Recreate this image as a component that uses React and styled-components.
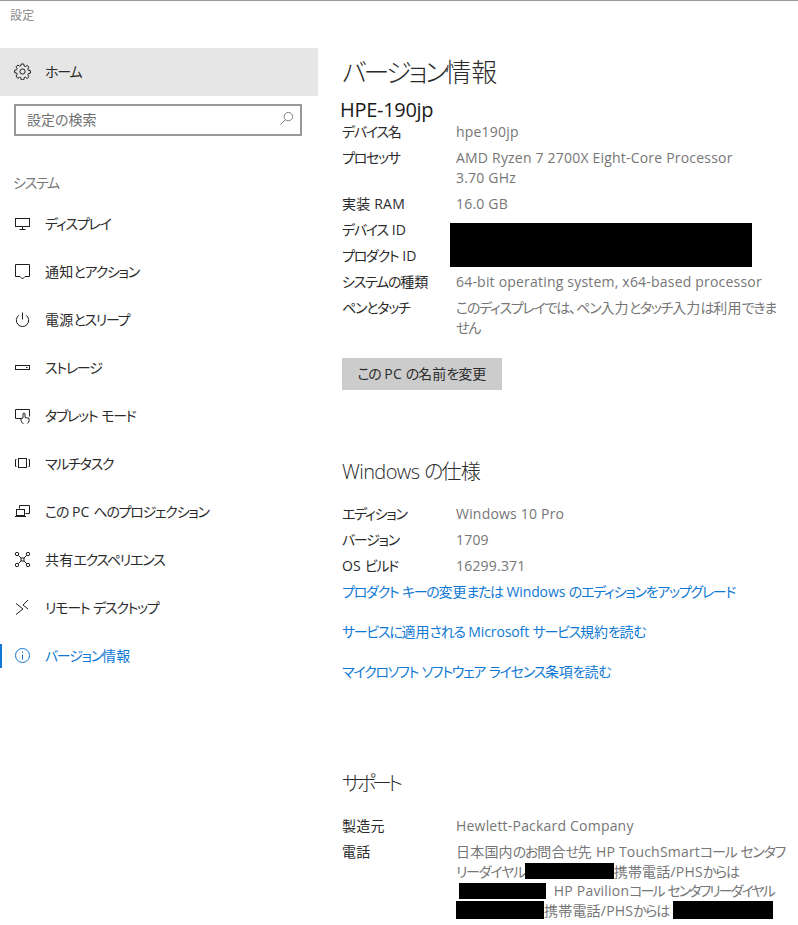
import React from "react";
import styled, { createGlobalStyle } from "styled-components";

const Global = createGlobalStyle`
  html, body { margin: 0; padding: 0; background: #fff; }
  body {
    width: 798px;
    height: 925px;
    overflow: hidden;
    font-family: "Open Sans", "Noto Sans CJK JP", sans-serif;
    font-size: 14px;
    font-feature-settings: "palt";
    letter-spacing: 0.2px;
    color: #2b2b2b;
  }
`;

const Window = styled.div`
  border-top: 1px solid #9a9a9a;
  height: 924px;
  display: flex;
  flex-direction: column;
`;

const TitleBar = styled.div`
  height: 47px;
  padding: 7px 0 0 10px;
  box-sizing: border-box;
  font-size: 12px;
  line-height: 16px;
  color: #8c8c8c;
`;

const Body = styled.div`
  display: flex;
  flex: 1;
  min-height: 0;
`;

const Sidebar = styled.nav`
  width: 318px;
  flex: none;
`;

const HomeRow = styled.div`
  height: 48px;
  background: #e6e6e6;
  display: flex;
  align-items: center;
  padding-left: 14px;
  padding-bottom: 2px;
  box-sizing: border-box;
`;

const IconSlot = styled.span`
  width: 17px;
  height: 17px;
  flex: none;
  margin-right: 14px;
  display: flex;
  align-items: center;
  justify-content: center;
  color: ${(p) => (p.$active ? "#0f78d4" : "#1f1f1f")};
`;

const SearchBox = styled.div`
  margin: 8px 16px 0 14px;
  height: 32px;
  box-sizing: border-box;
  border: 2px solid #999;
  display: flex;
  align-items: center;
  justify-content: space-between;
  padding: 0 6px 3px 11px;
  color: #6f6f6f;
  letter-spacing: 0;
`;

const SectionLabel = styled.div`
  margin: 37px 0 0 13px;
  height: 20px;
  line-height: 20px;
  color: #777;
`;

const NavList = styled.div`
  margin-top: 7px;
`;

const NavItem = styled.div`
  position: relative;
  height: 48px;
  box-sizing: border-box;
  display: flex;
  align-items: center;
  padding-left: 14px;
  padding-bottom: 2px;
  white-space: pre;
  color: ${(p) => (p.$active ? "#0f78d4" : "#2b2b2b")};
`;

const ActiveBar = styled.span`
  position: absolute;
  left: 0;
  top: 12px;
  width: 2px;
  height: 24px;
  background: #0f78d4;
`;

const Main = styled.main`
  flex: 1;
  padding: 0 12px 0 24px;
  min-width: 0;
`;

const PageTitle = styled.h1`
  margin: 0;
  padding-top: 4px;
  box-sizing: border-box;
  font-size: 26px;
  font-weight: 300;
  line-height: 40px;
  height: 48px;
  color: #2a2a2a;
`;

const DeviceName = styled.h2`
  margin: 0 0 0 -2px;
  font-size: 20px;
  font-weight: 400;
  line-height: 28px;
  height: 26px;
  letter-spacing: -0.3px;
  color: #1a1a1a;
`;

const SectionTitle = styled.h2`
  margin: ${(p) => p.$top}px 0 ${(p) => p.$bottom}px;
  font-size: 20px;
  font-weight: 300;
  line-height: 28px;
  letter-spacing: -0.6px;
  color: #2a2a2a;
`;

const Specs = styled.dl`
  position: relative;
  margin: 0;
  display: grid;
  grid-template-columns: 114px 1fr;
  row-gap: 6px;
  line-height: 20px;
`;

const Term = styled.dt`
  margin: 0;
  color: #2b2b2b;
`;

const Detail = styled.dd`
  margin: 0;
  color: #767676;
  line-height: ${(p) => p.$lh || 20}px;
`;

const Blackout = styled.span`
  position: absolute;
  left: 108px;
  top: 101px;
  width: 302px;
  height: 44px;
  background: #000;
`;

const InlineBlack = styled.span`
  display: inline-block;
  vertical-align: top;
  margin: ${(p) => p.$top}px ${(p) => p.$after || 0}px 0 ${(p) => p.$before || 0}px;
  height: ${(p) => p.$h || 16}px;
  width: ${(p) => p.$w}px;
  background: #000;
`;

const RenameButton = styled.button`
  display: block;
  margin-top: 20px;
  width: 160px;
  height: 32px;
  border: 0;
  padding: 0 0 2px;
  background: #ccc;
  color: #2b2b2b;
  font: inherit;
  letter-spacing: inherit;
  font-feature-settings: inherit;
`;

const LinkList = styled.div`
  margin-top: 6px;
  display: flex;
  flex-direction: column;
  gap: 20px;
  line-height: 20px;
  letter-spacing: -0.1px;
`;

const TextLink = styled.a`
  color: #0f78d4;
`;

const Kana = styled.span`
  letter-spacing: ${(p) => p.$t || -0.09}em;
`;

// Segoe/Yu Gothic kana is narrower than Noto's even with palt, so squeeze kana runs only
const Jp = ({ children, t }) =>
  children.split(/([\u3041-\u30ff]+)/).map((run, i) =>
    i % 2 ? <Kana key={i} $t={t}>{run}</Kana> : run
  );

const Icon = ({ children, size = 17 }) => (
  <svg width={size} height={size} viewBox="0 0 17 17" fill="none" stroke="currentColor" strokeWidth="1">
    {children}
  </svg>
);

const navItems = [
  {
    label: "ディスプレイ",
    icon: (
      <>
        <rect x="1.5" y="3.5" width="14" height="8" />
        <path d="M8.5 12v2M5.5 14.5h6" />
      </>
    ),
  },
  {
    label: "通知とアクション",
    icon: <path d="M1.5 1.5h14v12h-4.5l-2.5 2.5-2.5-2.5h-4.5z" />,
  },
  {
    label: "電源とスリープ",
    icon: (
      <>
        <path d="M8.5 1.5v7" />
        <path d="M5 4.2a6.2 6.2 0 1 0 7 0" />
      </>
    ),
  },
  {
    label: "ストレージ",
    icon: (
      <>
        <rect x="1.5" y="6.5" width="14" height="4" />
        <path d="M12 8.5h1.5" />
      </>
    ),
  },
  {
    label: "タブレット モード",
    icon: (
      <>
        <path d="M7 11.5h-5.5v-9h14v7" />
        <path d="M9.5 16.5a3.5 3.5 0 0 1-2.5-3v-2l2 -.5V7a1 1 0 0 1 2 0v3.5l4 .8v2.2a3.5 3.5 0 0 1-1.5 3" />
      </>
    ),
  },
  {
    label: "マルチタスク",
    icon: (
      <>
        <rect x="4.5" y="3.5" width="8" height="9" />
        <path d="M2.5 4.5h-1v7h1M14.5 4.5h1v7h-1" />
      </>
    ),
  },
  {
    label: "この PC へのプロジェクション",
    icon: (
      <>
        <path d="M5.5 5.5v-3h10v8h-4" />
        <rect x="2.5" y="6.5" width="8" height="6" />
        <path d="M1 13.5h11" />
      </>
    ),
  },
  {
    label: "共有エクスペリエンス",
    icon: (
      <>
        <circle cx="3" cy="3" r="1.7" />
        <circle cx="14" cy="3" r="1.7" />
        <circle cx="3" cy="14" r="1.7" />
        <circle cx="14" cy="14" r="1.7" />
        <rect x="7" y="7" width="3" height="3" />
        <path d="M4.3 4.3L7 7M12.7 4.3L10 7M4.3 12.7L7 10M12.7 12.7L10 10" />
      </>
    ),
  },
  {
    label: "リモート デスクトップ",
    icon: <path d="M2 4.5L9 10 2 15.5M14 1L9 6l5 4" />,
  },
];

const GearIcon = () => (
  <Icon>
    <circle cx="8.5" cy="8.5" r="2.6" />
    <path d="M7.2 1h2.6l.4 2.1 1.2.5 1.8-1.2 1.8 1.8-1.2 1.8.5 1.2 2.1.4v2.6l-2.1.4-.5 1.2 1.2 1.8-1.8 1.8-1.8-1.2-1.2.5-.4 2.1H7.2l-.4-2.1-1.2-.5-1.8 1.2L2 13l1.2-1.8-.5-1.2L.6 9.8V7.2l2.1-.4.5-1.2L2 3.8 3.8 2l1.8 1.2 1.2-.5z" />
  </Icon>
);

export default function App() {
  return (
    <>
      <Global />
      <Window>
        <TitleBar>設定</TitleBar>
        <Body>
          <Sidebar>
            <HomeRow>
              <IconSlot><GearIcon /></IconSlot>
              <span><Jp>ホーム</Jp></span>
            </HomeRow>
            <SearchBox>
              設定の検索
              <svg width="15" height="15" viewBox="0 0 16 16" fill="none" stroke="#777" strokeWidth="1">
                <circle cx="10" cy="6" r="4.5" />
                <path d="M6.8 9.2L1.5 14.5" />
              </svg>
            </SearchBox>
            <SectionLabel><Jp>システム</Jp></SectionLabel>
            <NavList>
              {navItems.map((item) => (
                <NavItem key={item.label}>
                  <IconSlot><Icon>{item.icon}</Icon></IconSlot>
                  <span><Jp>{item.label}</Jp></span>
                </NavItem>
              ))}
              <NavItem $active>
                <ActiveBar />
                <IconSlot $active>
                  <Icon>
                    <circle cx="8.5" cy="8.5" r="7" />
                    <path d="M8.5 7.5v5M8.5 4.5v1.5" />
                  </Icon>
                </IconSlot>
                <span><Jp>バージョン情報</Jp></span>
              </NavItem>
            </NavList>
          </Sidebar>
          <Main>
            <PageTitle><Jp t={-0.11}>バージョン情報</Jp></PageTitle>
            <DeviceName>HPE-190jp</DeviceName>
            <Specs>
              <Term><Jp>デバイス名</Jp></Term>
              <Detail>hpe190jp</Detail>
              <Term><Jp>プロセッサ</Jp></Term>
              <Detail>AMD Ryzen 7 2700X Eight-Core Processor<br />3.70 GHz</Detail>
              <Term><Jp>実装 RAM</Jp></Term>
              <Detail>16.0 GB</Detail>
              <Term><Jp>デバイス ID</Jp></Term>
              <Detail>&nbsp;</Detail>
              <Term><Jp>プロダクト ID</Jp></Term>
              <Detail>&nbsp;</Detail>
              <Term><Jp>システムの種類</Jp></Term>
              <Detail>64-bit operating system, x64-based processor</Detail>
              <Term><Jp>ペンとタッチ</Jp></Term>
              <Detail><Jp>このディスプレイでは、ペン入力とタッチ入力は利用できません</Jp></Detail>
              <Blackout />
            </Specs>
            <RenameButton><Jp>この PC の名前を変更</Jp></RenameButton>
            <SectionTitle $top={68} $bottom={18}><Jp>Windows の仕様</Jp></SectionTitle>
            <Specs>
              <Term><Jp>エディション</Jp></Term>
              <Detail>Windows 10 Pro</Detail>
              <Term><Jp>バージョン</Jp></Term>
              <Detail>1709</Detail>
              <Term><Jp>OS ビルド</Jp></Term>
              <Detail>16299.371</Detail>
            </Specs>
            <LinkList>
              <TextLink><Jp>プロダクト キーの変更または Windows のエディションをアップグレード</Jp></TextLink>
              <TextLink><Jp>サービスに適用される Microsoft サービス規約を読む</Jp></TextLink>
              <TextLink><Jp>マイクロソフト ソフトウェア ライセンス条項を読む</Jp></TextLink>
            </LinkList>
            <SectionTitle $top={88} $bottom={18}><Jp t={-0.2}>サポート</Jp></SectionTitle>
            <Specs>
              <Term>製造元</Term>
              <Detail>Hewlett-Packard Company</Detail>
              <Term>電話</Term>
              <Detail $lh={19.5}>
                <Jp>日本国内のお問合せ先 HP TouchSmartコール センタフリーダイヤル</Jp>
                <InlineBlack $w={89} $top={1.5} />
                <Jp>携帯電話/PHSからは </Jp>
                <InlineBlack $w={87} $top={2} $before={3} $after={4} />
                <Jp t={-0.14}> HP Pavilionコール センタフリーダイヤル </Jp>
                <InlineBlack $w={88} $top={0.5} $h={18} />
                <Jp>携帯電話/PHSからは </Jp>
                <InlineBlack $w={100} $top={0.5} $h={18} />
              </Detail>
            </Specs>
          </Main>
        </Body>
      </Window>
    </>
  );
}
